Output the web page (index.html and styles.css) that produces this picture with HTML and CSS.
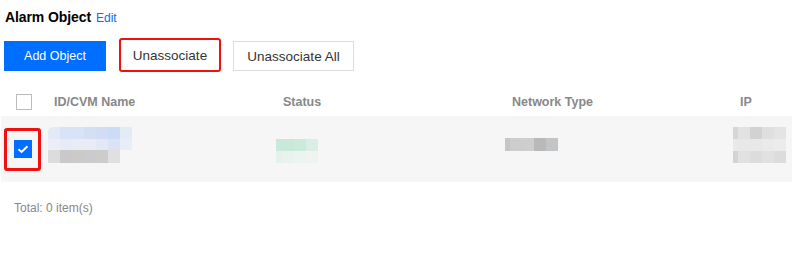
FILE: index.html
```html
<!DOCTYPE html>
<html>
<head>
<meta charset="utf-8">
<link rel="stylesheet" href="styles.css">
</head>
<body>
<div class="page">
  <div class="title-row">
    <h2 class="title">Alarm Object</h2>
    <a class="edit">Edit</a>
  </div>
  <div class="toolbar">
    <button class="btn btn-primary">Add Object</button>
    <button class="btn btn-default btn-marked">Unassociate</button>
    <button class="btn btn-default">Unassociate All</button>
  </div>
</div>
<div class="table">
  <div class="thead">
    <div class="cell cell-check"><span class="checkbox"></span></div>
    <div class="cell th">ID/CVM Name</div>
    <div class="cell th">Status</div>
    <div class="cell th">Network Type</div>
    <div class="cell th">IP</div>
  </div>
  <div class="trow">
    <div class="cell cell-check">
      <span class="marked-box"><span class="checkbox checked"><svg viewBox="0 0 18 18" width="18" height="18"><path d="M4.5 9.2 L7.6 12 L13.5 6.2" fill="none" stroke="#fff" stroke-width="2"/></svg></span></span>
    </div>
    <div class="cell">
      <div class="mosaic mosaic-id">
        <div class="mr r1"><i style="background:#e3e9f6"></i><i style="background:#d8e3f7"></i><i style="background:#d8e3f7"></i><i style="background:#d4dff6"></i><i style="background:#d2ddf5"></i><i style="background:#cddcf6"></i><i style="background:#e3ebf7"></i></div>
        <div class="mr r2"><i style="background:#eceef6"></i><i style="background:#e6ebf5"></i><i style="background:#e8ecf5"></i><i style="background:#e9ecf4"></i><i style="background:#e4e8f5"></i><i style="background:#d9e3f5"></i><i style="background:#e8eef7"></i></div>
        <div class="mr r3"><i style="background:#dcdcdc"></i><i style="background:#c9c9c9"></i><i style="background:#cbcac7"></i><i style="background:#cacbcd"></i><i style="background:#cccccb"></i><i style="background:#e0e0e0"></i></div>
      </div>
    </div>
    <div class="cell">
      <div class="mosaic mosaic-status">
        <div class="mr r1"><i style="background:#c9eadb"></i><i style="background:#c8e9d9"></i><i style="background:#cbeadc"></i><i style="background:#d9eee4"></i></div>
        <div class="mr r2"><i style="background:#e4f2ec"></i><i style="background:#e8f3ee"></i><i style="background:#ecf4f0"></i><i style="background:#eff3f2"></i></div>
      </div>
    </div>
    <div class="cell">
      <div class="mosaic mosaic-net">
        <div class="mr r1"><i style="background:#c6c6c6"></i><i style="background:#cdcdcd"></i><i style="background:#cecece"></i><i style="background:#b8b9bb"></i><i style="background:#c3c4c6"></i></div>
      </div>
    </div>
    <div class="cell">
      <div class="mosaic mosaic-ip">
        <div class="mr r1"><i style="background:#d5d6d7"></i><i style="background:#e2e2e2"></i><i style="background:#d2d2d2"></i><i style="background:#dddfe0"></i><i style="background:#e4e4e4"></i></div>
        <div class="mr r2"><i style="background:#e9e9e9"></i><i style="background:#e8e8e8"></i><i style="background:#e8e8e8"></i><i style="background:#eaeaec"></i><i style="background:#ececec"></i></div>
        <div class="mr r3"><i style="background:#d3d3d3"></i><i style="background:#e1e1e1"></i><i style="background:#dcdcdc"></i><i style="background:#e1e1e1"></i><i style="background:#dcdcdc"></i></div>
      </div>
    </div>
  </div>
</div>
<div class="total">Total: 0 item(s)</div>
</body>
</html>
```
FILE: styles.css
```css
* { box-sizing: border-box; }
body {
  margin: 0;
  font-family: "Liberation Sans", Arial, sans-serif;
  color: #000;
  background: #fff;
  overflow: hidden;
}
.page { padding: 0 4px; }
.title-row {
  display: flex;
  align-items: baseline;
  gap: 5px;
  padding: 8px 0 0 1px;
  height: 30px;
}
.title {
  margin: 0;
  font-size: 14px;
  font-weight: bold;
  line-height: 18px;
  letter-spacing: -0.1px;
}
.edit {
  color: #006eff;
  font-size: 12px;
}
.toolbar {
  display: flex;
  align-items: center;
  margin-top: 11px;
  height: 30px;
}
.btn {
  height: 30px;
  font-family: inherit;
  padding: 0;
  margin: 0;
  border-radius: 0;
  cursor: pointer;
}
.btn-primary {
  width: 102px;
  background: #006eff;
  color: #fff;
  border: none;
  font-size: 12.5px;
}
.btn-default {
  background: #fff;
  color: #333;
  border: 1px solid #ddd;
  font-size: 13.5px;
}
.btn-marked {
  margin-left: 13px;
  width: 102px;
  height: 34px;
  border: 2px solid #f01010;
  border-radius: 3px;
  position: relative;
  top: -1px;
}
.toolbar .btn:last-child {
  margin-left: 12px;
  width: 121px;
}
.table {
  margin-top: 16px;
}
.thead, .trow {
  display: grid;
  grid-template-columns: 46px 229px 229px 228px 1fr;
}
.thead { height: 29px; align-items: center; }
.trow {
  height: 66px;
  background: #f6f6f6;
  margin-left: 1px;
}
.cell { padding-left: 8px; min-width: 0; overflow: hidden; }
.cell-check { padding-left: 0; display: flex; align-items: center; }
.th {
  font-size: 12.5px;
  font-weight: bold;
  color: #888;
}
.checkbox {
  display: inline-block;
  width: 16px;
  height: 16px;
  border: 1px solid #bbb;
  background: #fff;
  margin-left: 16px;
}
.marked-box {
  display: flex;
  align-items: center;
  justify-content: center;
  margin-left: 3px;
  width: 37px;
  height: 43px;
  border: 3px solid #f01010;
  border-radius: 3px;
}
.checkbox.checked {
  margin-left: 0;
  width: 18px;
  height: 18px;
  border: none;
  background: #006eff;
}
.checkbox.checked svg { display: block; }
.mosaic {
  display: flex;
  flex-direction: column;
  align-items: flex-start;
}
.mr { display: flex; }
.mr i { display: block; width: 12px; min-width: 12px; flex: none; }
.mosaic-id { margin: 11px 0 0 -7px; }
.mosaic-id .r1 i { height: 12px; }
.mosaic-id .r1 i:first-child { border-top-left-radius: 5px; }
.mosaic-id .r2 i { height: 11px; }
.mosaic-id .r3 i { height: 13px; }
.mosaic-status { margin: 23px 0 0 -14px; }
.mosaic-status .r1 i, .mosaic-status .r2 i { height: 12px; }
.mosaic-net { margin: 22px 0 0 -15px; }
.mosaic-net .r1 i { height: 13px; }
.mosaic-ip { margin: 11px 0 0 -15px; }
.mosaic-ip .r1 i, .mosaic-ip .r2 i, .mosaic-ip .r3 i { height: 12px; }
.total {
  margin-top: 19px;
  padding-left: 14px;
  font-size: 12px;
  color: #888;
}
```
